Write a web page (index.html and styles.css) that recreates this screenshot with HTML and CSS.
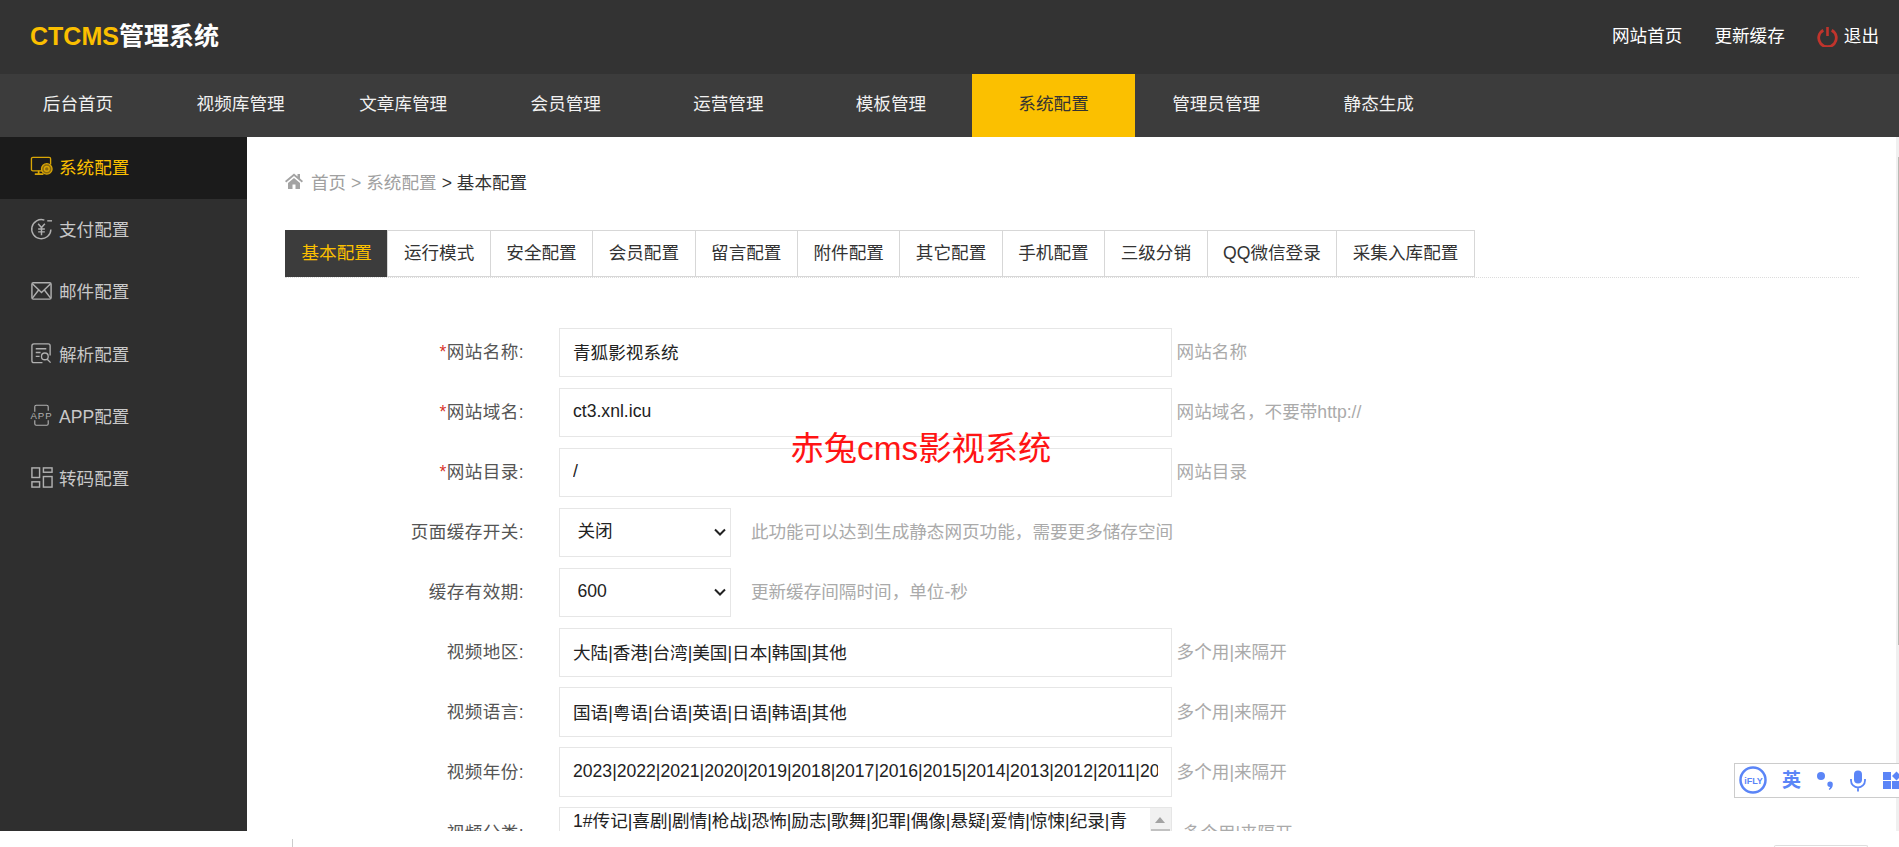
FILE: index.html
```html
<!DOCTYPE html>
<html lang="zh-CN">
<head>
<meta charset="utf-8">
<title>CTCMS管理系统</title>
<link rel="stylesheet" href="styles.css">
</head>
<body>
<div class="app">
  <header class="top">
    <div class="logo"><span class="logo-en">CTCMS</span>管理系统</div>
    <div class="top-links">
      <a class="top-link">网站首页</a>
      <a class="top-link">更新缓存</a>
      <a class="top-link quit">
        <svg class="power" viewBox="0 0 21 21" width="21" height="21"><path d="M6.300 4.200A8.800 8.800 0 1 0 14.700 4.200" fill="none" stroke="#c0342c" stroke-width="2.800"/><path d="M10.500 1v9" stroke="#c0342c" stroke-width="2.600"/></svg>
        <span>退出</span>
      </a>
    </div>
  </header>
  <nav class="nav">
    <a class="nav-item">后台首页</a>
    <a class="nav-item">视频库管理</a>
    <a class="nav-item">文章库管理</a>
    <a class="nav-item">会员管理</a>
    <a class="nav-item">运营管理</a>
    <a class="nav-item">模板管理</a>
    <a class="nav-item on">系统配置</a>
    <a class="nav-item">管理员管理</a>
    <a class="nav-item">静态生成</a>
  </nav>
  <div class="body">
    <aside class="side">
      <a class="side-item on">
        <svg class="side-icon" viewBox="0 0 24 24" fill="none" stroke="currentColor" stroke-width="1.400"><path d="M14 16.500H3a1.500 1.500 0 0 1-1.500-1.500V4A1.500 1.500 0 0 1 3 2.500h17A1.500 1.500 0 0 1 21.500 4v6"/><path d="M9 16.500v3M5 20h9" stroke-width="1.800"/><circle cx="17.500" cy="14.500" r="5.500" fill="#8a6a10"/><circle cx="17.500" cy="14.500" r="2.500"/></svg>
        <span>系统配置</span>
      </a>
      <a class="side-item">
        <svg class="side-icon" viewBox="0 0 24 24" fill="none" stroke="currentColor" stroke-width="1.500"><path d="M15 3.200A10 10 0 1 0 21.800 13"/><path d="M18 4h5" /><path d="M8.500 7l3.500 4 3.500-4M12 11v8M8.500 12.500h7M8.500 15.500h7"/></svg>
        <span>支付配置</span>
      </a>
      <a class="side-item">
        <svg class="side-icon" viewBox="0 0 24 24" fill="none" stroke="currentColor" stroke-width="1.500"><rect x="2" y="4" width="20" height="17" rx="1.500"/><path d="M2.500 5l9.500 9 9.500-9M2.500 20l6.500-8.500M21.500 20l-6.500-8.500"/></svg>
        <span>邮件配置</span>
      </a>
      <a class="side-item">
        <svg class="side-icon" viewBox="0 0 24 24" fill="none" stroke="currentColor" stroke-width="1.400"><path d="M13 21.500H4A2 2 0 0 1 2 19.500V4a2 2 0 0 1 2-2h15a2 2 0 0 1 2 2v10"/><path d="M6 7h11M6 11h5M6 15h4"/><circle cx="15.500" cy="15" r="3.500"/><path d="M18 18l3.500 3.500"/></svg>
        <span>解析配置</span>
      </a>
      <a class="side-item">
        <svg class="side-icon" viewBox="0 0 24 24" fill="none" stroke="currentColor" stroke-width="1.200"><path d="M5 8V2.800A1.500 1.500 0 0 1 6.500 1.300h11A1.500 1.500 0 0 1 19 2.800V7M5 17v3.700a1.500 1.500 0 0 0 1.500 1.500h11a1.500 1.500 0 0 0 1.500-1.500V17"/><text class="app-text" x="12" y="16" text-anchor="middle">APP</text></svg>
        <span>APP配置</span>
      </a>
      <a class="side-item">
        <svg class="side-icon" viewBox="0 0 24 24" fill="none" stroke="currentColor" stroke-width="1.500"><rect x="2" y="2" width="8" height="10"/><rect x="14" y="2" width="9" height="4.500"/><rect x="14" y="11" width="9" height="11"/><rect x="2" y="16.500" width="8" height="5.500"/></svg>
        <span>转码配置</span>
      </a>
    </aside>
    <main class="main">
      <div class="crumb">
        <svg class="home" viewBox="0 0 18 16" width="18" height="16"><path d="M9 0.500L0 8l1.200 1.400L9 3l7.800 6.400L18 8l-3-2.500V1h-2.500v2.400zM3 10v6h4.500v-4.500h3V16H15v-6L9 5z" fill="#a3a3a3"/></svg>
        <span class="crumb-link">首页 &gt; 系统配置</span>
        <span class="crumb-now">&gt; 基本配置</span>
      </div>
      <div class="tabs">
        <a class="tab on">基本配置</a>
        <a class="tab">运行模式</a>
        <a class="tab">安全配置</a>
        <a class="tab">会员配置</a>
        <a class="tab">留言配置</a>
        <a class="tab">附件配置</a>
        <a class="tab">其它配置</a>
        <a class="tab">手机配置</a>
        <a class="tab">三级分销</a>
        <a class="tab">QQ微信登录</a>
        <a class="tab">采集入库配置</a>
      </div>
      <form class="form">
        <div class="row">
          <label class="label"><i class="req">*</i>网站名称:</label>
          <input class="field" value="青狐影视系统">
          <span class="hint">网站名称</span>
        </div>
        <div class="row">
          <label class="label"><i class="req">*</i>网站域名:</label>
          <input class="field" value="ct3.xnl.icu">
          <span class="hint">网站域名，不要带http://</span>
        </div>
        <div class="row">
          <label class="label"><i class="req">*</i>网站目录:</label>
          <input class="field" value="/">
          <span class="hint">网站目录</span>
        </div>
        <div class="row">
          <label class="label">页面缓存开关:</label>
          <select class="pick"><option>关闭</option><option>开启</option></select>
          <span class="hint wide">此功能可以达到生成静态网页功能，需要更多储存空间</span>
        </div>
        <div class="row">
          <label class="label">缓存有效期:</label>
          <select class="pick"><option>600</option></select>
          <span class="hint wide">更新缓存间隔时间，单位-秒</span>
        </div>
        <div class="row">
          <label class="label">视频地区:</label>
          <input class="field" value="大陆|香港|台湾|美国|日本|韩国|其他">
          <span class="hint">多个用|来隔开</span>
        </div>
        <div class="row">
          <label class="label">视频语言:</label>
          <input class="field" value="国语|粤语|台语|英语|日语|韩语|其他">
          <span class="hint">多个用|来隔开</span>
        </div>
        <div class="row">
          <label class="label">视频年份:</label>
          <input class="field" value="2023|2022|2021|2020|2019|2018|2017|2016|2015|2014|2013|2012|2011|2010|2009|2008">
          <span class="hint">多个用|来隔开</span>
        </div>
        <div class="row tall">
          <label class="label">视频分类:</label>
          <div class="area-wrap">
            <textarea class="area" rows="4">1#传记|喜剧|剧情|枪战|恐怖|励志|歌舞|犯罪|偶像|悬疑|爱情|惊悚|纪录|青春|战争|科幻|动作|古装</textarea>
            <div class="area-bar"><span class="area-up"></span><span class="area-thumb"></span></div>
          </div>
          <span class="hint area-hint">多个用|来隔开</span>
        </div>
      </form>
      <div class="page-bar"><span class="page-thumb"></span></div>
    </main>
  </div>
</div>
<div class="foot">
  <span class="foot-line"></span>
  <span class="foot-box"></span>
</div>
<div class="mark">赤兔cms影视系统</div>
<div class="ifly">
  <svg class="ifly-logo" viewBox="0 0 28 28" width="28" height="28"><circle cx="14" cy="14" r="12.500" fill="none" stroke="#5b85f7" stroke-width="2.500"/><text class="ifly-text" x="14.500" y="17.500" text-anchor="middle">iFLY</text></svg>
  <span class="ifly-lang">英</span>
  <svg class="ifly-punct" viewBox="0 0 18 20" width="18" height="20"><circle cx="5" cy="5" r="4" fill="#5b85f7"/><path d="M14 10.500a2.800 2.800 0 0 1 2.800 3c0 2.500-1.300 4.300-3.300 5.500l-.8-1c.8-.7 1.300-1.300 1.400-2.100a2.600 2.600 0 0 1-.1-5.400z" fill="#5b85f7"/></svg>
  <svg class="ifly-mic" viewBox="0 0 16 22" width="16" height="22"><rect x="4" y="0.500" width="8" height="13" rx="4" fill="#5b85f7"/><path d="M1 9v1.500a7 7 0 0 0 14 0V9M8 17.500V21.500" fill="none" stroke="#5b85f7" stroke-width="1.800"/></svg>
  <svg class="ifly-grid" viewBox="0 0 18 18" width="18" height="18"><rect x="0" y="1" width="8" height="8" fill="#5b85f7"/><rect x="0" y="10" width="8" height="8" fill="#5b85f7"/><rect x="9" y="10" width="8" height="8" fill="#5b85f7"/><path d="M13.500 0.500L18 5l-4.500 4.500L9 5z" fill="#5b85f7"/></svg>
</div>
</body>
</html>
```
FILE: styles.css
```css
* { box-sizing: border-box; }
html, body { margin: 0; padding: 0; height: 847px; overflow: hidden; background: #fff; }
body {
  position: relative;
  font-family: "Liberation Sans", "Noto Sans CJK SC", sans-serif;
  font-size: 17.6px;
  color: #333;
}
a { color: inherit; text-decoration: none; }
.app { height: 831px; display: flex; flex-direction: column; overflow: hidden; }

.top {
  height: 74px;
  flex: none;
  background: #333;
  display: flex;
  align-items: center;
  justify-content: space-between;
  padding: 0 20px 0 30px;
}
.logo { font-size: 25px; font-weight: 700; color: #fff; line-height: 30px; padding-bottom: 2px; }
.logo-en { color: #fbbf00; }
.top-links { display: flex; align-items: center; gap: 32px; color: #fff; }
.top-link { display: flex; align-items: center; gap: 6px; line-height: 24px; padding-bottom: 2px; }
.power { display: block; }

.nav {
  height: 63px;
  flex: none;
  background: #3c3c3c;
  display: flex;
  overflow: hidden;
}
.nav-item {
  flex: none;
  width: 162.6px;
  text-align: center;
  line-height: 61px;
  height: 63px;
  color: #f1f1f1;
}
.nav-item:first-child { margin-left: -3.3px; }
.nav-item.on { background: #fbc000; color: #333; }

.body { flex: 1; display: flex; min-height: 0; }
.side { width: 247px; flex: none; background: #2f2f2f; }
.side-item {
  height: 62.3px;
  display: flex;
  align-items: center;
  gap: 6px;
  padding-left: 30px;
  padding-bottom: 4px;
  color: #c8c8c8;
}
.side-item.on { background: #1b1b1b; color: #fbc000; }
.side-icon { width: 23px; height: 23px; flex: none; color: #b0b0b0; overflow: visible; }
.side-item.on .side-icon { color: #d9a606; }
.app-text { font-size: 10px; stroke: none; fill: currentColor; font-family: "Liberation Sans", sans-serif; letter-spacing: 1px; }

.main { flex: 1; position: relative; padding: 34px 40px 0 38px; min-width: 0; overflow: hidden; }
.crumb { display: flex; align-items: center; height: 20px; color: #333; gap: 5px; }
.home { margin-right: 3px; }
.crumb-link { color: #a0a0a0; }
.crumb-now { color: #333; }

.tabs { display: flex; height: 47.7px; margin-top: 39.3px; border-bottom: 1px dotted #dcdcdc; }
.tab {
  height: 46.7px;
  padding: 0 15.5px;
  border: 1px solid #d7d7d7;
  margin-left: -1px;
  line-height: 44.7px;
  color: #333;
  white-space: nowrap;
}
.tab:first-child { margin-left: 0; }
.tab.on { background: #3c3c3c; border-color: #3c3c3c; color: #fbc000; }

.form { display: flex; flex-direction: column; gap: 10.6px; margin-top: 49.6px; }
.row { display: flex; align-items: center; height: 49.4px; flex: none; }
.row.tall { align-items: flex-start; height: 120px; }
.label { width: 239px; margin-right: 35px; flex: none; text-align: right; color: #555; line-height: 24px; padding-bottom: 1px; letter-spacing: .4px; }
.row.tall .label { margin-top: 14px; }
.req { color: #d9352b; font-style: normal; }
.field {
  width: 612.6px;
  height: 49.4px;
  flex: none;
  border: 1px solid #e6e6e6;
  padding: 0 13px 1px;
  font: inherit;
  color: #222;
  background: #fff;
  outline: none;
}
.pick {
  appearance: none;
  width: 172.4px;
  height: 49.4px;
  flex: none;
  border: 1px solid #e6e6e6;
  border-radius: 0;
  padding: 0 24px 2px 17.5px;
  font: inherit;
  color: #222;
  background-color: #fff;
  background-image: url("data:image/svg+xml,%3Csvg xmlns='http://www.w3.org/2000/svg' width='12' height='8' viewBox='0 0 12 8'%3E%3Cpath d='M1 1.500l5 5 5-5' fill='none' stroke='%23222' stroke-width='2'/%3E%3C/svg%3E");
  background-repeat: no-repeat;
  background-position: right 4.500px center;
  outline: none;
}
.hint { margin-left: 5px; color: #aaa; white-space: nowrap; line-height: 24px; padding-bottom: 1px; }
.hint.wide { margin-left: 19.500px; }
.area-wrap { position: relative; width: 612.6px; height: 120px; flex: none; }
.area {
  display: block;
  width: 100%;
  height: 100%;
  border: 1px solid #e6e6e6;
  padding: 1px 24px 0 13px;
  font: inherit;
  line-height: 24px;
  color: #222;
  resize: none;
  overflow: hidden;
  outline: none;
}
.area-bar { position: absolute; top: 1px; right: 1px; bottom: 1px; width: 21px; background: #f1f1f1; }
.area-up {
  position: absolute; top: 9px; left: 5px;
  width: 0; height: 0;
  border-left: 5.500px solid transparent;
  border-right: 5.500px solid transparent;
  border-bottom: 6px solid #a3a3a3;
}
.area-thumb { position: absolute; top: 21px; left: 1px; right: 1px; height: 60px; background: #c1c1c1; }
.area-hint { margin-left: 11px; margin-top: 14px; }

.page-bar { position: absolute; top: 0; right: 0; bottom: 0; width: 3px; background: #f0f0f0; }
.page-thumb { position: absolute; top: 20px; right: 0; width: 1px; height: 488px; background: #b9bbb6; }

.foot { height: 16px; display: flex; }
.foot-line { width: 1px; height: 8px; margin: 8px 0 0 292px; background: #ccc; }
.foot-box { width: 94px; height: 2px; margin: 14px 31px 0 auto; border: 1px solid #ddd; border-bottom: 0; border-radius: 4px 4px 0 0; }

.mark {
  position: absolute;
  left: 790.500px;
  top: 426.600px;
  font-size: 33.300px;
  line-height: 44px;
  color: #ff1414;
  white-space: nowrap;
}

.ifly {
  position: absolute;
  left: 1734px;
  top: 763px;
  right: 0;
  height: 35px;
  background: #fff;
  border: 1px solid #ccc;
  border-right: 0;
  overflow: hidden;
}
.ifly > * { position: absolute; }
.ifly-logo { left: 4px; top: 2px; }
.ifly-text { font-size: 9px; font-weight: 700; fill: #5b85f7; font-family: "Liberation Sans", sans-serif; }
.ifly-lang { left: 47px; top: 4px; font-size: 19px; line-height: 25px; font-weight: 700; color: #5b85f7; }
.ifly-punct { left: 81px; top: 7px; }
.ifly-mic { left: 115px; top: 6px; }
.ifly-grid { left: 147.500px; top: 7px; }
```
